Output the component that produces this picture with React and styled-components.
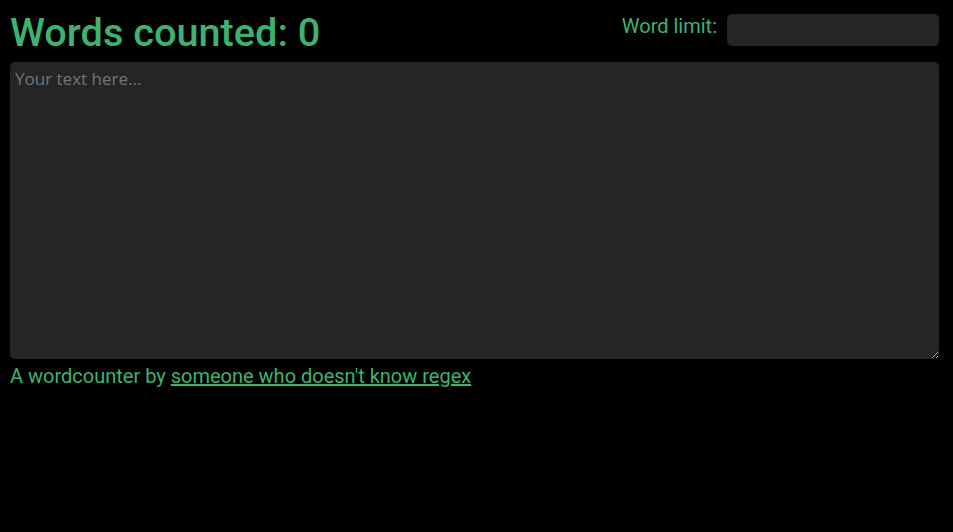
import styled, { createGlobalStyle } from 'styled-components';
import { useState } from 'react';

const GlobalStyle = createGlobalStyle`
    html, body {
        margin: 0;
        padding: 0;
        background-color: #000;
    }
`;

export default function App() {
    const [text, setText] = useState('');
    const [limit, setLimit] = useState('');

    const count = text.trim() === '' ? 0 : text.trim().split(/\s+/).length;

    return (
        <Page>
            <GlobalStyle />
            <Header>
                <Title>Words counted: {count}</Title>
                <Limit>
                    <label htmlFor="limit">Word limit:</label>
                    <LimitInput id="limit" value={limit} onChange={e => setLimit(e.target.value)} />
                </Limit>
            </Header>
            <TextBox
                placeholder="Your text here..."
                value={text}
                onChange={e => setText(e.target.value)}
            />
            <Footer>
                A wordcounter by <a href="#">someone who doesn't know regex</a>
            </Footer>
        </Page>
    );
}

const Page = styled.div`
    padding: 10px 14px 10px 10px;
    font-family: Roboto, "Liberation Sans", sans-serif;
    color: #3cb371;
`;

const Header = styled.div`
    display: flex;
    justify-content: space-between;
    align-items: flex-start;
    height: 52px;
`;

const Title = styled.h1`
    margin: 0;
    font-size: 39.7px;
    font-weight: 500;
    line-height: 46px;
`;

const Limit = styled.div`
    display: flex;
    align-items: flex-start;
    gap: 10px;
    padding-top: 4px;

    label {
        font-size: 20px;
        line-height: 24px;
    }
`;

const LimitInput = styled.input`
    width: 212px;
    height: 32px;
    box-sizing: border-box;
    border: none;
    border-radius: 5px;
    background-color: #252525;
    color: #ccc;
    font-size: 16px;
    padding: 0 8px;
    outline: none;
`;

const TextBox = styled.textarea`
    display: block;
    width: 100%;
    height: 297px;
    box-sizing: border-box;
    border: none;
    border-radius: 5px;
    background-color: #252525;
    color: #ccc;
    font-family: "Open Sans", sans-serif;
    font-size: 17px;
    padding: 5px 5px;
    outline: none;

    ::placeholder {
        color: #777;
    }
`;

const Footer = styled.p`
    margin: 5px 0 0;
    font-size: 20px;

    a {
        color: #3cb371;
    }
`;
